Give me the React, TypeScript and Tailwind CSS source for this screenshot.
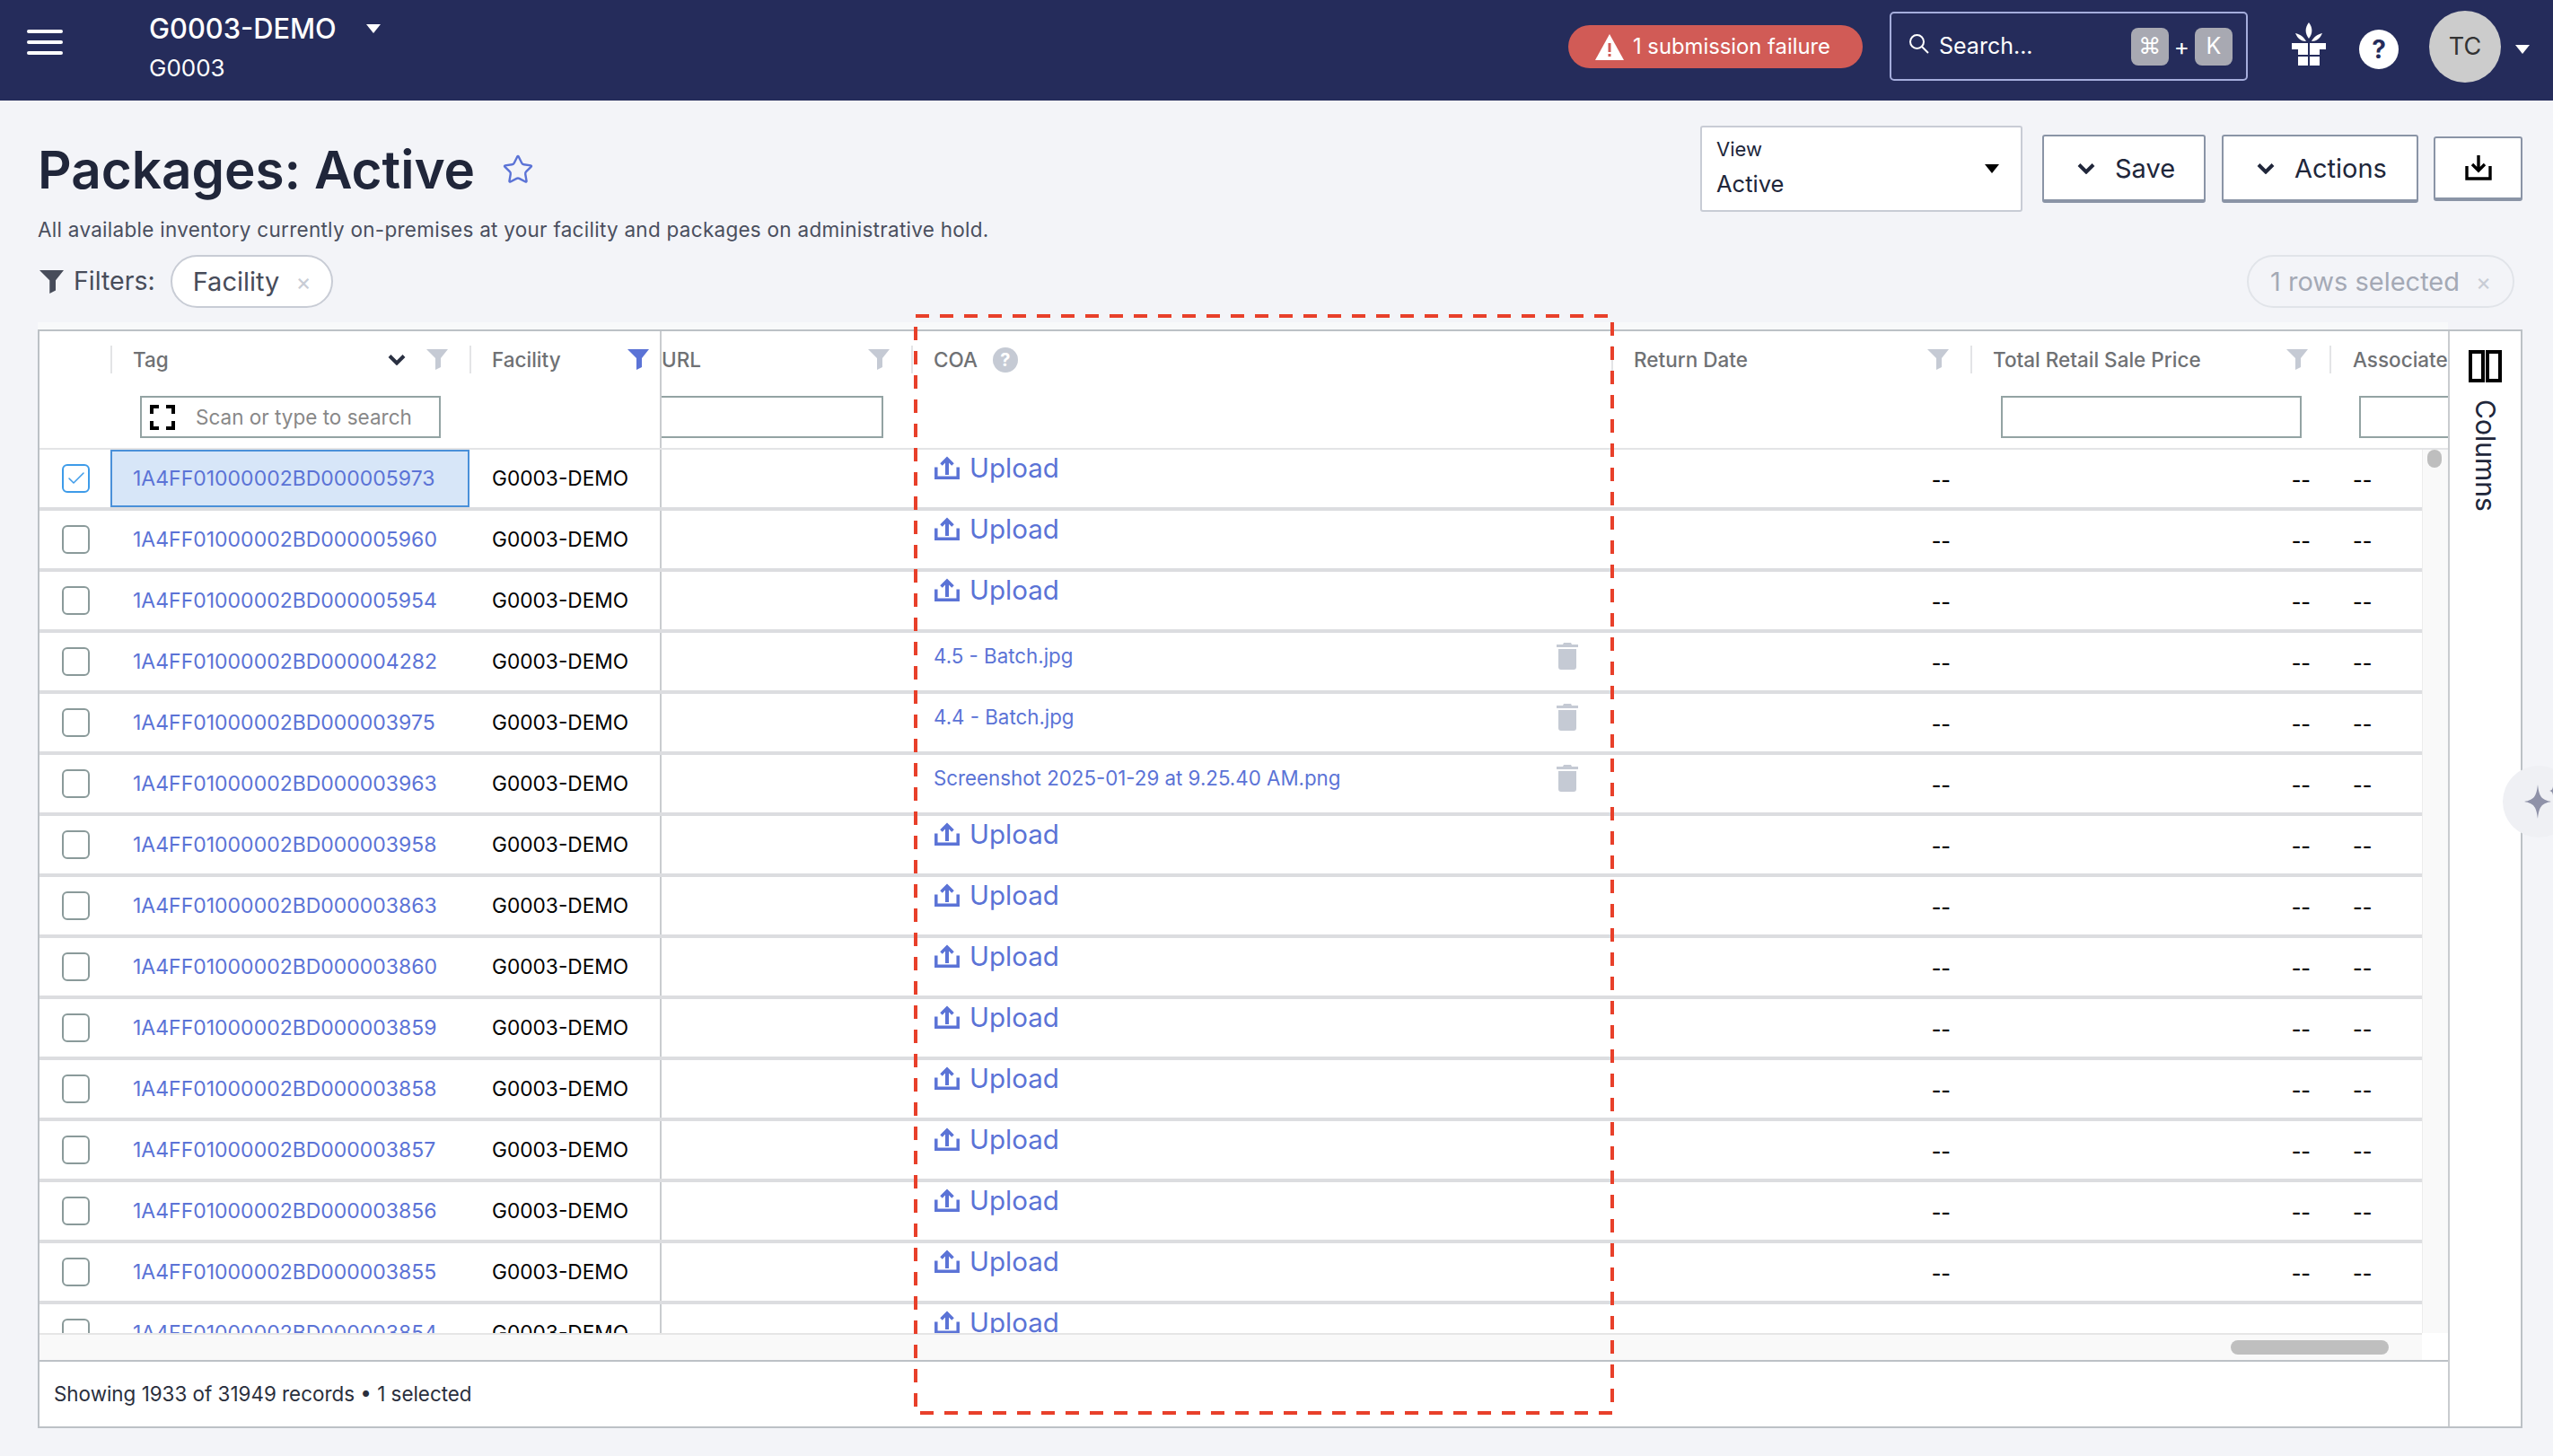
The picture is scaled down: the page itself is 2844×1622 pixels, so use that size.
import { Star, Check } from "lucide-react";

const TAG_PREFIX = "1A4FF01000002BD00000";

const rows = [
  { tag: "5973", selected: true },
  { tag: "5960" },
  { tag: "5954" },
  { tag: "4282", file: "4.5 - Batch.jpg" },
  { tag: "3975", file: "4.4 - Batch.jpg" },
  { tag: "3963", file: "Screenshot 2025-01-29 at 9.25.40 AM.png" },
  { tag: "3958" },
  { tag: "3863" },
  { tag: "3860" },
  { tag: "3859" },
  { tag: "3858" },
  { tag: "3857" },
  { tag: "3856" },
  { tag: "3855" },
  { tag: "3854" },
];

function Caret({ className }: { className: string }) {
  return (
    <svg viewBox="0 0 16 10" className={className} fill="currentColor">
      <path d="M0 0h16L8 10z" />
    </svg>
  );
}

function Funnel({ className }: { className: string }) {
  return (
    <svg viewBox="0 0 24 23" className={className} fill="currentColor">
      <path d="M0 0h24l-8 10v10l-6 3V10z" />
    </svg>
  );
}

function Chevron({ className }: { className: string }) {
  return (
    <svg viewBox="0 0 20 12" className={className} fill="none" stroke="currentColor" strokeWidth="4">
      <path d="M2 1.5l8 8 8-8" />
    </svg>
  );
}

function UploadIcon() {
  return (
    <svg viewBox="0 0 28 26" className="w-[28px] h-[26px] shrink-0 text-[#5b73d6]" fill="none" stroke="currentColor">
      <path d="M1.8 12.6v11.7h24.4V12.6" strokeWidth="3.5" />
      <path d="M14 21V3" strokeWidth="4" />
      <path d="M7.5 9.5L14 3l6.5 6.5" strokeWidth="3.6" />
    </svg>
  );
}

function TrashIcon() {
  return (
    <svg viewBox="0 0 24 30" className="w-[24px] h-[30px] text-[#c5cad4]" fill="currentColor">
      <path d="M8 0h8l1 2h7v3H0V2h7zM2 7h20v20a3 3 0 0 1-3 3H5a3 3 0 0 1-3-3z" />
    </svg>
  );
}

function GiftIcon() {
  return (
    <svg viewBox="0 0 38 48" className="w-[38px] h-[48px] text-white" fill="currentColor">
      <path d="M19 0c4.500 6 4.500 12 0 18-4.500-6-4.500-12 0-18z" />
      <path d="M4 12c5 1 9.500 4 12 9-5.500 0-9.500-3-12-9zM34 12c-5 1-9.500 4-12 9 5.500 0 9.500-3 12-9z" />
      <path d="M0 23h18v13H7v-6H0zM20 23h18v7h-7v6H20zM7 38h11v10H7zM20 38h11v10H20z" />
    </svg>
  );
}

function HeaderCell({
  width,
  label,
  labelClass = "pl-[23px]",
  noSep,
  funnel,
  sort,
  help,
  input,
  divider,
}: {
  width: string;
  label: string;
  labelClass?: string;
  noSep?: boolean;
  funnel?: "gray" | "blue";
  sort?: boolean;
  help?: boolean;
  input?: React.ReactNode;
  divider?: boolean;
}) {
  return (
    <div className={`${width} shrink-0 h-full flex flex-col ${divider ? "border-r-2 border-[#c9cccf]" : ""}`}>
      <div className={`mt-[16px] h-[31px] flex items-center pr-[24px] ${noSep ? "" : "border-l-2 border-[#e3e4e6]"} ${labelClass}`}>
        <span className="text-[22.5px] font-medium text-[#6f7174] whitespace-nowrap">{label}</span>
        {help && (
          <span className="ml-[17px] w-[28px] h-[28px] rounded-full bg-[#c5cad4] text-white flex items-center justify-center text-[20px] font-bold">
            ?
          </span>
        )}
        {sort && <Chevron className="ml-auto w-[20px] h-[12px] text-[#2a3042]" />}
        {funnel && (
          <Funnel
            className={`${sort ? "ml-[23px]" : "ml-auto"} w-[24px] h-[23px] ${funnel === "blue" ? "text-[#5b73d6] -mr-[12px]" : "text-[#c5cad4]"}`}
          />
        )}
      </div>
      <div className="mt-[25px] h-[47px]">{input}</div>
    </div>
  );
}

function Row({ row }: { row: (typeof rows)[number] }) {
  return (
    <div className="flex h-[68px] shrink-0 border-b-4 border-[#dcdde0] bg-white">
      <div className="w-[79px] shrink-0 pl-[25px] flex items-center">
        <span
          className={`w-[31px] h-[32px] rounded-[6px] border-2 flex items-center justify-center ${
            row.selected ? "border-[#3d9be9]" : "border-[#8a9a9a]"
          }`}
        >
          {row.selected && <Check className="w-[24px] h-[24px] text-[#3d9be9]" strokeWidth={1.5} />}
        </span>
      </div>
      <div
        className={`w-[400px] shrink-0 flex items-center pl-[23px] text-[23px] text-[#5b73d6] ${
          row.selected ? "bg-[#d7e6f8] border-2 border-[#4a90d9]" : "border-2 border-transparent"
        }`}
      >
        {TAG_PREFIX + row.tag}
      </div>
      <div className="w-[214px] shrink-0 flex items-center pl-[25px] text-[22.7px] text-black border-r-2 border-[#c9cccf]">
        G0003-DEMO
      </div>
      <div className="w-[278px] shrink-0" />
      <div className="w-[780px] shrink-0 pl-[25px] pr-[37px]">
        {row.file ? (
          <div className="flex items-center justify-between h-full pb-[12px] text-[22.3px] text-[#5b73d6]">
            <span>{row.file}</span>
            <TrashIcon />
          </div>
        ) : (
          <div className="ml-[1px] flex items-center gap-[11px] h-full pb-[24px] text-[29.5px] text-[#5b73d6]">
            <UploadIcon />
            <span>Upload</span>
          </div>
        )}
      </div>
      <div className="w-[400px] shrink-0 flex items-center justify-end pt-[4px] pr-[22px] text-[23px] text-black font-medium">--</div>
      <div className="w-[400px] shrink-0 flex items-center justify-end pt-[4px] pr-[21px] text-[23px] text-black font-medium">--</div>
      <div className="w-[103px] shrink-0 flex items-center pt-[4px] pl-[26px] text-[23px] text-black font-medium">--</div>
    </div>
  );
}

export default function App() {
  return (
    <div className="relative w-[2844px] h-[1622px] overflow-hidden bg-[#f3f4f8] font-[Inter,sans-serif]">
      {/* Top bar */}
      <header className="h-[112px] bg-[#252c5b] flex items-start text-white">
        <div className="ml-[30px] mt-[33px] w-[40px] h-[28px] flex flex-col justify-between">
          <span className="h-[4px] rounded-full bg-white" />
          <span className="h-[4px] rounded-full bg-white" />
          <span className="h-[4px] rounded-full bg-white" />
        </div>
        <div className="ml-[96px] mt-[15px]">
          <div className="flex items-center h-[34px]">
            <span className="text-[30.8px] font-medium">G0003-DEMO</span>
            <Caret className="ml-[33px] w-[16px] h-[10px] text-white" />
          </div>
          <div className="mt-[10px] text-[26px] leading-[34px]">G0003</div>
        </div>
        <div className="ml-auto flex items-start pr-[26px]">
          <div className="mt-[28px] w-[328px] h-[48px] rounded-full bg-[#d15b56] flex items-center pl-[30px] text-[23.8px]">
            <svg viewBox="0 0 32 29" className="w-[32px] h-[29px] mr-[10px]">
              <path d="M16 0l16 29H0z" fill="white" />
              <path d="M14.500 10h3v10h-3zM14.500 22h3v3h-3z" fill="#d15b56" />
            </svg>
            1 submission failure
          </div>
          <div className="ml-[30px] mt-[13px] w-[399px] h-[77px] rounded-[5px] border-2 border-[#a5addc] flex items-center pl-[19px] pr-[15px]">
            <svg viewBox="0 0 24 24" className="w-[24px] h-[24px] -mt-[6px]" fill="none" stroke="currentColor" strokeWidth="2">
              <circle cx="9.5" cy="9.5" r="7.5" />
              <path d="M15 15l7 7" />
            </svg>
            <span className="ml-[10px] text-[25px]">Search...</span>
            <span className="ml-auto w-[42px] h-[42px] rounded-[8px] bg-[#a8a9b2] flex items-center justify-center text-[25px]">⌘</span>
            <span className="mx-[6px] text-[26px]">+</span>
            <span className="w-[42px] h-[42px] rounded-[8px] bg-[#a8a9b2] flex items-center justify-center text-[25px]">K</span>
          </div>
          <div className="ml-[49px] mt-[25px]">
            <GiftIcon />
          </div>
          <div className="ml-[37px] mt-[33px] w-[44px] h-[44px] rounded-full bg-white text-[#252c5b] flex items-center justify-center text-[28px] font-bold">
            ?
          </div>
          <div className="ml-[34px] mt-[12px] w-[80px] h-[80px] rounded-full bg-[#cccccc] text-[#333333] flex items-center justify-center text-[27px]">
            TC
          </div>
          <Caret className="ml-[16px] mt-[50px] w-[16px] h-[10px] text-white" />
        </div>
      </header>

      {/* Title row */}
      <div className="h-[172px] pl-[42px] pr-[34px] flex justify-between">
        <div className="pt-[39px]">
          <div className="flex items-center h-[76px]">
            <h1 className="text-[58.4px] font-semibold text-[#20263a]">Packages: Active</h1>
            <Star className="ml-[30px] w-[36px] h-[36px] text-[#5b73d6]" strokeWidth={1.6} />
          </div>
          <p className="mt-[13px] text-[22.5px] leading-[32px] text-[#4a4f5e] tracking-[0.27px]">
            All available inventory currently on-premises at your facility and packages on administrative hold.
          </p>
        </div>
        <div className="pt-[28px] flex items-start">
          <div className="w-[359px] h-[96px] bg-white border-2 border-[#c8ccd5] rounded-[3px] pl-[16px] pr-[24px] flex items-center justify-between">
            <div>
              <div className="text-[22px] leading-[30px] text-[#20263a] mt-[-3px]">View</div>
              <div className="mt-[7px] text-[25.5px] leading-[34px] text-[#20263a]">Active</div>
            </div>
            <Caret className="w-[16px] h-[10px] text-black" />
          </div>
          <button className="ml-[22px] mt-[10px] w-[182px] h-[76px] pt-[2px] bg-white border-2 border-b-4 border-[#8a94a6] rounded-[3px] flex items-center pl-[37px] gap-[22px] text-[29px] text-[#20263a]">
            <Chevron className="w-[20px] h-[12px]" />
            Save
          </button>
          <button className="ml-[18px] mt-[10px] w-[219px] h-[76px] pt-[2px] bg-white border-2 border-b-4 border-[#8a94a6] rounded-[3px] flex items-center pl-[37px] gap-[22px] text-[29px] text-[#20263a]">
            <Chevron className="w-[20px] h-[12px]" />
            Actions
          </button>
          <button className="ml-[17px] mt-[12px] w-[99px] h-[72px] bg-white border-2 border-b-4 border-[#8a94a6] rounded-[3px] flex items-center justify-center">
            <svg viewBox="0 0 30 28" className="w-[30px] h-[28px]" fill="none" stroke="black">
              <path d="M15 0v16M8 10l7 7 7-7" strokeWidth="3.4" />
              <path d="M2 12v14h26V12" strokeWidth="3.4" />
            </svg>
          </button>
        </div>
      </div>

      {/* Filters */}
      <div className="h-[59px] pl-[44px] pr-[43px] flex items-center justify-between">
        <div className="flex items-center">
          <Funnel className="w-[27px] h-[28px] text-[#474c5a]" />
          <span className="ml-[11px] text-[28.5px] text-[#474c5a]">Filters:</span>
          <span className="ml-[17px] h-[59px] w-[181px] rounded-full border-2 border-[#c8ccd5] bg-white flex items-center pl-[23px] text-[29px] text-[#474c5a]">
            Facility
            <span className="ml-[18px] text-[26px] text-[#c8ccd5]">×</span>
          </span>
        </div>
        <span className="h-[59px] w-[298px] rounded-full border-2 border-[#e1e4e9] flex items-center pl-[24px] text-[29px] text-[#a4a9b5] whitespace-nowrap">
          1 rows selected
          <span className="ml-[18px] text-[26px] text-[#c8ccd5]">×</span>
        </span>
      </div>

      {/* Table */}
      <div className="mt-[16px] ml-[42px] w-[2685px] h-[8px] bg-[#f8f9fa]" />
      <div className="ml-[42px] w-[2768px] h-[1224px] bg-white border-2 border-[#bcc1c6] flex">
        <div className="w-[2683px] shrink-0 flex flex-col">
          <div className="h-[132px] shrink-0 border-b-2 border-[#e3e4e6] flex overflow-hidden">
            <div className="w-[79px] shrink-0" />
            <HeaderCell
              width="w-[400px]"
              label="Tag"
              sort
              funnel="gray"
              input={
                <div className="ml-[33px] w-[335px] h-[47px] border-2 border-[#93a3a3] flex items-center pl-[9px] text-[22.5px] text-[#888888]">
                  <svg viewBox="0 0 28 28" className="w-[28px] h-[28px] mr-[23px]" fill="none" stroke="black" strokeWidth="4">
                    <path d="M10 2H2v8M18 2h8v8M10 26H2v-8M18 26h8v-8" />
                  </svg>
                  Scan or type to search
                </div>
              }
            />
            <HeaderCell width="w-[214px]" label="Facility" funnel="blue" divider />
            <HeaderCell
              width="w-[278px]"
              label="URL"
              labelClass="pl-0"
              noSep
              funnel="gray"
              input={<div className="w-[247px] h-[47px] border-2 border-l-0 border-[#93a3a3]" />}
            />
            <HeaderCell width="w-[780px]" label="COA" help />
            <HeaderCell width="w-[400px]" label="Return Date" funnel="gray" />
            <HeaderCell
              width="w-[400px]"
              label="Total Retail Sale Price"
              funnel="gray"
              input={<div className="ml-[34px] w-[335px] h-[47px] border-2 border-[#93a3a3]" />}
            />
            <HeaderCell
              width="w-[132px]"
              label="Associated"
              labelClass="pl-[24px] pr-0"
              input={<div className="ml-[33px] w-[120px] h-[47px] border-2 border-[#93a3a3]" />}
            />
          </div>

          <div className="h-[984px] shrink-0 flex overflow-hidden">
            <div className="w-[2654px] shrink-0 flex flex-col overflow-hidden">
              {rows.map((row) => (
                <Row key={row.tag} row={row} />
              ))}
            </div>
            <div className="w-[29px] shrink-0 bg-[#f9f9f9] border-l border-[#ececec] pl-[5px]">
              <div className="w-[16px] h-[20px] rounded-full bg-[#bebebe]" />
            </div>
          </div>

          <div className="h-[30px] shrink-0 flex">
            <div className="w-[2654px] shrink-0 bg-[#f9f9f9] border-t-2 border-[#e6e6e6] pl-[2441px] pt-[6px]">
              <div className="w-[176px] h-[16px] rounded-full bg-[#bfbfbf]" />
            </div>
          </div>

          <div className="flex-1 border-t-2 border-[#bcc1c6] pl-[16px] flex items-center text-[22.4px] text-[#2a2f3d]">
            Showing 1933 of 31949 records • 1 selected
          </div>
        </div>

        <div className="flex-1 border-l-2 border-[#c9cccf] flex flex-col items-center pt-[21px]">
          <svg viewBox="0 0 37 36" className="w-[37px] h-[36px] shrink-0" fill="none" stroke="black" strokeWidth="4">
            <path d="M2 2h14v32H2zM21 2h14v32H21z" />
          </svg>
          <span className="mt-[19px] text-[30px] text-[#20263a] [writing-mode:vertical-rl]">Columns</span>
        </div>
      </div>

      {/* AI button */}
      <div className="absolute left-[2788px] top-[853px] w-[80px] h-[80px] rounded-full bg-[#eff0f4] flex items-center pl-[24px]">
        <svg viewBox="0 0 40 38" className="w-[40px] h-[38px] text-[#8f92a8] shrink-0" fill="currentColor">
          <path d="M15 0c1.500 13 4 17 15 19-11 2-13.500 6-15 19-1.500-13-4-17-15-19 11-2 13.500-6 15-19z" />
          <path d="M32 2c.5 3.500 1.500 4.500 4 5-2.500.5-3.500 1.500-4 5-.5-3.500-1.500-4.500-4-5 2.500-.5 3.500-1.500 4-5z" />
        </svg>
      </div>

      {/* Red annotation */}
      <svg className="absolute left-[1018px] top-[350px] w-[780px] h-[1226px] pointer-events-none" fill="none">
        <rect x="2" y="2" width="776" height="1222" stroke="#e8402a" strokeWidth="4" strokeDasharray="15 12" />
      </svg>
    </div>
  );
}
